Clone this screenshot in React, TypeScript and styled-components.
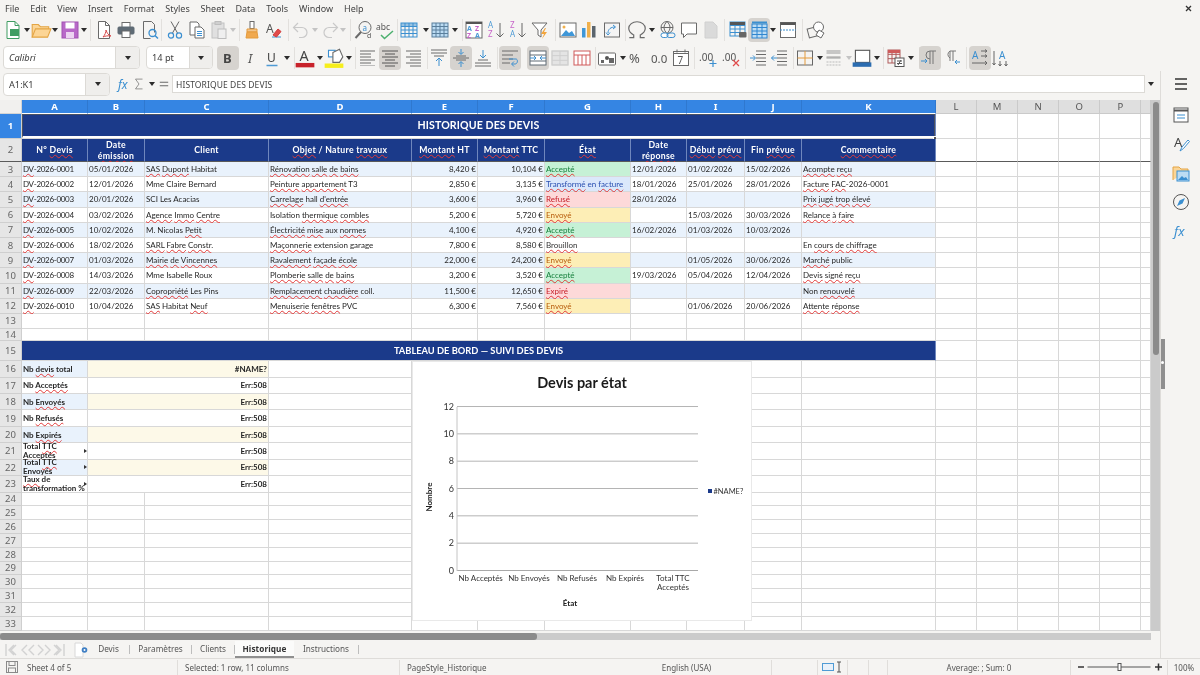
import React from 'react';
import styled, { createGlobalStyle } from 'styled-components';

const Global = createGlobalStyle`
  html, body { margin: 0; padding: 0; background: #f5f4f2; }
  * { box-sizing: border-box; }
`;

const UI = `"Noto Sans", "Open Sans", sans-serif`;
const SHEET = `Lato, "Liberation Sans", sans-serif`;

const Page = styled.div`
  width: 1200px; height: 675px; overflow: hidden; display: flex; flex-direction: column;
  background: #f5f4f2; font-family: ${UI}; color: #3c3c3c; filter: blur(0.3px);
`;
const MenuBar = styled.div`
  height: 16px; display: flex; align-items: center; padding-left: 5px; gap: 10.9px; font-size: 9px; color: #444; position: relative;
`;
const MenuItem = styled.span``;
const CloseMark = styled.svg`margin-left: auto; margin-right: 8px; width: 7px; height: 7px;`;
const Bar = styled.div<{ $h: number }>`height: ${p => p.$h}px; display: flex; align-items: center; flex: none;`;
const Slot = styled.div<{ $w: number; $ml: number; $active?: boolean }>`
  flex: none; width: ${p => p.$w}px; height: 24px; margin-left: ${p => p.$ml}px; display: flex; align-items: center; justify-content: center;
  border-radius: 4px; background: ${p => (p.$active ? '#d6d3cf' : 'transparent')};
`;
const Sep = styled.div<{ $ml: number }>`flex: none; width: 1px; height: 22px; margin-left: ${p => p.$ml}px; background: #e2e0dd;`;
const Drop = styled.div<{ $ml: number; $off?: boolean }>`
  flex: none; width: 0; height: 0; margin-left: ${p => p.$ml}px;
  border-left: 3.5px solid transparent; border-right: 3.5px solid transparent; border-top: 4px solid ${p => (p.$off ? '#c4c4c4' : '#2c2c2c')};
`;
const Combo = styled.div<{ $w: number; $ml: number; $h?: number }>`
  flex: none; width: ${p => p.$w}px; height: ${p => p.$h ?? 23}px; margin-left: ${p => p.$ml}px; display: flex; background: #fff;
  border: 1px solid #dcdad6; border-radius: 4px; overflow: hidden;
`;
const ComboText = styled.div<{ $italic?: boolean }>`
  flex: 1; display: flex; align-items: center; padding-left: 5px; font-size: 9.2px; color: #3c3c3c; font-style: ${p => (p.$italic ? 'italic' : 'normal')};
`;
const ComboBtn = styled.div<{ $w: number }>`
  width: ${p => p.$w}px; background: #efeeec; border-left: 1px solid #dcdad6; display: flex; align-items: center; justify-content: center;
`;
const Main = styled.div`flex: 1; min-height: 0; display: flex;`;
const Left = styled.div`width: 1161px; flex: none; display: flex; flex-direction: column; border-right: 1px solid #dedcd9;`;
const SideBar = styled.div`flex: 1; display: flex; flex-direction: column; align-items: center; padding-top: 2px; position: relative;`;
const SideBtn = styled.div<{ $mb: number }>`height: 22px; display: flex; align-items: center; justify-content: center; margin-bottom: ${p => p.$mb}px;`;
const SideHandle = styled.div`
  position: absolute; left: 0; top: 268px; width: 4px; height: 50px; background: #8f8f8f;
  &::after { content: ''; position: absolute; left: 0; top: 22px; width: 3px; height: 3px; border-radius: 50%; background: #fff; }
`;
const FormulaBar = styled.div`height: 29px; flex: none; display: flex; align-items: center; padding-bottom: 3px;`;
const FormulaInput = styled.div`
  flex: none; width: 973px; height: 18px; margin-left: 1px; background: #fff; border: 1px solid #dcdad6; display: flex; align-items: center;
  padding-left: 3px; font-size: 8.5px; color: #444; letter-spacing: 0.1px;
`;
const SheetRow = styled.div`height: 531px; flex: none; display: flex;`;
const Grid = styled.div`
  position: relative; width: 1151px; height: 531px; display: grid; background: #fff; font-family: ${SHEET};
  grid-template-columns: 22px 66px 57px 124px 143px 66px 67px 86px 56px 58px 57px 134px repeat(5, 41.1px) 9.5px;
  grid-template-rows: 14px 24.5px 23.5px repeat(11, 15.2px) 12px 20px repeat(8, 16.45px) repeat(10, 13.8px);
`;
const Corner = styled.div`background: #f1f0ee; border-right: 1px solid #d4d4d4; border-bottom: 1px solid #d4d4d4;`;
const ColHead = styled.div<{ $sel?: boolean }>`
  display: flex; align-items: center; justify-content: center; font-size: 9.5px; font-family: ${UI};
  font-weight: ${p => (p.$sel ? 700 : 400)}; color: ${p => (p.$sel ? '#fff' : '#555')};
  background: ${p => (p.$sel ? '#3585e3' : '#dfdfdf')}; border-right: 1px solid ${p => (p.$sel ? '#2f78cf' : '#cacaca')};
  border-bottom: 1px solid ${p => (p.$sel ? '#fff' : '#cacaca')};
`;
const RowHead = styled.div<{ $sel?: boolean; $freeze?: boolean }>`
  display: flex; align-items: center; justify-content: center; font-size: 9.5px; font-family: ${UI};
  font-weight: ${p => (p.$sel ? 700 : 400)}; color: ${p => (p.$sel ? '#fff' : '#666')};
  background: ${p => (p.$sel ? '#3585e3' : '#e6e6e6')}; border-right: 1px solid #cfcfcf;
  border-bottom: ${p => (p.$freeze ? '1.5px solid #5a5a5a' : '1px solid #cfcfcf')};
`;
const Cell = styled.div<{ $span?: number; $bg?: string; $right?: boolean; $center?: boolean; $bold?: boolean; $color?: string; $freeze?: boolean; $tight?: boolean; $narrow?: boolean }>`
  grid-column: span ${p => p.$span ?? 1}; min-width: 0; position: relative; display: flex; align-items: center;
  justify-content: ${p => (p.$right ? 'flex-end' : p.$center ? 'center' : 'flex-start')};
  text-align: ${p => (p.$center ? 'center' : 'left')};
  padding: 0 1px; font-size: 8px; white-space: ${p => (p.$tight ? 'normal' : 'nowrap')};
  line-height: ${p => (p.$tight ? '9px' : 'normal')}; letter-spacing: ${p => (p.$narrow ? '-0.3px' : '0')};
  font-weight: ${p => (p.$bold ? 700 : 400)}; color: ${p => p.$color ?? '#262626'}; background: ${p => p.$bg ?? '#fff'};
  border-right: 1px solid #d8d8d8; border-bottom: ${p => (p.$freeze ? '1.5px solid #5a5a5a' : '1px solid #d8d8d8')};
`;
const NavyCell = styled(Cell)`
  background: #1b3a8a; color: #fff; font-weight: 700; font-size: 8.7px; letter-spacing: 0.3px; line-height: 11px; white-space: normal;
  border-right: 1px solid #6f87bd;
`;
const TitleText = styled.span`font-size: 10.6px; letter-spacing: 0.1px;`;
const BandText = styled.span`font-size: 9.3px; letter-spacing: 0;`;
const Selection = styled.div`
  position: absolute; inset: 0; border: 1px solid #4a5160; border-bottom: 2px solid #fff;
`;
const Handle = styled.div`position: absolute; right: -3px; bottom: -3px; width: 5px; height: 5px; background: #555; border: 1px solid #fff;`;
const Tri = styled.div`
  position: absolute; right: 0; top: 50%; margin-top: -2px; width: 0; height: 0;
  border-top: 2px solid transparent; border-bottom: 2px solid transparent; border-left: 3px solid #333;
`;
const Squig = styled.span`text-decoration: underline wavy #e23a3a; text-decoration-thickness: 0.7px; text-underline-offset: 0.5px; text-decoration-skip-ink: none;`;
const ChartBox = styled.div`position: absolute; left: 412px; top: 261px; width: 340px; height: 260px; background: #fff; border: 1px solid #e9e9e9;`;
const VScroll = styled.div`width: 9.5px; flex: none; background: #cbcbcb; padding: 2px 1px 0 2px;`;
const VThumb = styled.div`height: 253px; background: #8b8b8b; border-radius: 3px;`;
const HScroll = styled.div`height: 10px; flex: none; background: #f5f4f2; padding-top: 2px;`;
const HTrack = styled.div`width: 1151px; height: 7px; background: #cbcbcb;`;
const HThumb = styled.div`width: 537px; height: 7px; background: #8b8b8b; border-radius: 3px;`;
const TabBar = styled.div`height: 17px; flex: none; display: flex; align-items: center; font-size: 8.2px;`;
const Tab = styled.div<{ $w: number; $on?: boolean }>`
  flex: none; width: ${p => p.$w}px; height: 17px; display: flex; align-items: center; justify-content: center; color: ${p => (p.$on ? '#333' : '#555')};
  font-weight: ${p => (p.$on ? 700 : 400)}; letter-spacing: ${p => (p.$on ? '0.1px' : '0')};
  background: ${p => (p.$on ? '#fbfbfa' : 'transparent')}; border-bottom: 2px solid ${p => (p.$on ? '#8f8f8f' : 'transparent')};
`;
const TabSep = styled.div`flex: none; width: 1px; height: 9px; background: #bdbdbd;`;
const Status = styled.div`
  height: 17px; flex: none; display: flex; align-items: center; font-size: 8px; color: #555; border-top: 1px solid #dedcd9; background: #f5f4f2;
`;
const StatusCell = styled.div<{ $w: number; $center?: boolean; $end?: boolean; $pl?: number }>`
  flex: none; width: ${p => p.$w}px; height: 15px; display: flex; align-items: center; gap: 9px; padding-left: ${p => p.$pl ?? 0}px;
  justify-content: ${p => (p.$center ? 'center' : 'flex-start')}; border-right: ${p => (p.$end ? 'none' : '1px solid #e0dedb')};
`;

/* ---------- icons (viewBox 20×20) ---------- */
const Ico: React.FC<{ children: React.ReactNode; s?: number }> = ({ children, s = 20 }) => (
  <svg width={s} height={s} viewBox="0 0 20 20" fill="none" stroke="#6a6a6a" strokeWidth={1}>{children}</svg>
);
const GridLines = ({ x, y, w, h, nx, ny, c }: { x: number; y: number; w: number; h: number; nx: number; ny: number; c: string }) => (
  <g stroke={c}>
    <rect x={x} y={y} width={w} height={h} />
    {Array.from({ length: nx - 1 }, (_, i) => <path key={i} d={`M${x + ((i + 1) * w) / nx} ${y}v${h}`} />)}
    {Array.from({ length: ny - 1 }, (_, i) => <path key={i} d={`M${x} ${y + ((i + 1) * h) / ny}h${w}`} />)}
  </g>
);
const Lines = ({ x, w, ys, c = '#6a6a6a' }: { x: number; w: number; ys: number[]; c?: string }) => (
  <path d={ys.map(y => `M${x} ${y}h${w}`).join('')} stroke={c} />
);
const Letter = ({ x, y, t, c, size = 10, bold, italic }: { x: number; y: number; t: string; c: string; size?: number; bold?: boolean; italic?: boolean }) => (
  <text x={x} y={y} fill={c} stroke="none" fontSize={size} fontFamily={UI} fontWeight={bold ? 700 : 400} fontStyle={italic ? 'italic' : 'normal'}>{t}</text>
);

const icons: Record<string, React.ReactNode> = {
  new: <Ico><path d="M4 1.5h8l4 4v13H4z" stroke="#3f9d62" fill="#fff" /><path d="M12 1.5v4h4" stroke="#3f9d62" /><rect x="7" y="9" width="9" height="7" fill="#3f9d62" stroke="none" /></Ico>,
  open: <Ico s={22}><path d="M2 16.5V5h5.5l2 2H17v2" stroke="#e4a544" fill="#fbd596" /><path d="M2 16.5 5 9h14l-3 7.5z" stroke="#e4a544" fill="#fcd595" /></Ico>,
  save: <Ico><rect x="2" y="2" width="16" height="16" fill="#b868c8" stroke="#a150b2" /><rect x="5.5" y="2.5" width="9" height="6" fill="#fff" stroke="none" /><rect x="6" y="12" width="8" height="6" fill="#ecd3f1" stroke="none" /></Ico>,
  pdf: <Ico><path d="M4.5 1.5h7l4 4v13h-11z" fill="#fff" stroke="#6a6a6a" /><path d="M11.5 1.5v4h4" /><path d="M9 17c2-2 3-5 3-7 1 3 2 5 5 6-3-.5-6 0-8 1z" stroke="#d84a4a" /></Ico>,
  print: <Ico><rect x="6" y="2.5" width="8" height="5" fill="#fff" /><rect x="2" y="7" width="16" height="7" rx="1" fill="#5f6b75" stroke="#5f6b75" /><rect x="6" y="11" width="8" height="6.5" fill="#fff" /></Ico>,
  preview: <Ico><path d="M3.5 1.5h8l3 3v8M3.5 1.5v17h7" /><circle cx="12.5" cy="13" r="3.5" stroke="#3b8fd0" strokeWidth={1.3} /><path d="m15 15.5 3 3" stroke="#3b8fd0" strokeWidth={1.5} /></Ico>,
  cut: <Ico><path d="M6 1.5 12.5 13M14 1.5 7.5 13" stroke="#666" /><circle cx="6" cy="15.5" r="2.6" stroke="#3b8fd0" strokeWidth={1.2} /><circle cx="14" cy="15.5" r="2.6" stroke="#3b8fd0" strokeWidth={1.2} /></Ico>,
  copy: <Ico><path d="M3 2h7l2 2v11H3z" fill="#fff" /><path d="M8 7h6l3 3v8H8z" fill="#fff" /><Lines x={10} w={5} ys={[11.5, 13.5, 15.5]} c="#3b8fd0" /></Ico>,
  paste: <Ico><rect x="3" y="3" width="12" height="15" fill="#e0e0e0" stroke="#c2c2c2" /><rect x="6" y="1.5" width="6" height="3" fill="#cfcfcf" stroke="#bdbdbd" /><rect x="9" y="9" width="8" height="9.5" fill="#efefef" stroke="#bdbdbd" /></Ico>,
  clone: <Ico><rect x="8" y="1.5" width="4" height="7" fill="#fff" /><path d="M5 9h10v3H5z" fill="#f2c58d" stroke="#e49b3d" /><path d="M5 12h10l1 6H4z" fill="#f0a94f" stroke="#e49b3d" /></Ico>,
  clear: <Ico><Letter x={3} y={13} t="A" c="#555" size={12} /><path d="M9 17h9" stroke="#3b8fd0" /><path d="m10 15 5-6 3 2.5-4.5 5.5z" fill="#e14b4b" stroke="#d13b3b" /></Ico>,
  undo: <Ico><path d="M7 3 2.5 7.5 7 12M3 7.5h8a5 5 0 0 1 0 10H8" stroke="#c9c9c9" strokeWidth={1.2} /></Ico>,
  redo: <Ico><path d="M13 3l4.5 4.5L13 12M17 7.5H9a5 5 0 0 0 0 10h3" stroke="#c9c9c9" strokeWidth={1.2} /></Ico>,
  find: <Ico><circle cx="11" cy="7.5" r="6" /><path d="M7 12 1.5 18" strokeWidth={2} /><Letter x={8.5} y={10.5} t="a" c="#3b8fd0" size={8} /><Letter x={13} y={18} t="d" c="#555" size={7} /></Ico>,
  spell: <Ico><Letter x={1} y={10} t="abc" c="#555" size={8.5} /><path d="m6 15 3.5 3.5L18 11" stroke="#4db06f" strokeWidth={1.5} /></Ico>,
  table: <Ico><GridLines x={2} y={3} w={16} h={14} nx={4} ny={4} c="#3b8fd0" /><rect x="2" y="3" width="16" height="3.5" fill="#3b8fd0" opacity={0.5} stroke="none" /></Ico>,
  rows: <Ico><rect x="2" y="3" width="16" height="14" fill="#bcdcf3" stroke="none" /><GridLines x={2} y={3} w={16} h={14} nx={4} ny={4} c="#5a7f9c" /></Ico>,
  sortg: <Ico><rect x="2" y="2" width="16" height="16" fill="#fff" /><rect x="2" y="2" width="16" height="2" fill="#555" stroke="none" /><Letter x={3} y={11} t="A" c="#4f9bd5" size={7} bold /><Letter x={11} y={11} t="Z" c="#c765c9" size={7} bold /><Letter x={3} y={17.5} t="Z" c="#c765c9" size={7} bold /><Letter x={11} y={17.5} t="A" c="#4f9bd5" size={7} bold /></Ico>,
  az: <Ico><Letter x={1} y={8} t="A" c="#4f9bd5" size={8} /><Letter x={1} y={17} t="Z" c="#c765c9" size={8} /><path d="M13 3v14M9.5 13.5 13 17l3.5-3.5" stroke="#666" /></Ico>,
  za: <Ico><Letter x={1} y={8} t="Z" c="#c765c9" size={8} /><Letter x={1} y={17} t="A" c="#4f9bd5" size={8} /><path d="M13 3v14M9.5 13.5 13 17l3.5-3.5" stroke="#666" /></Ico>,
  filter: <Ico><path d="M2 3h15l-6 7v7l-3-2v-5z" fill="#fff" /><path d="M15 8l-4 6h3l-2 5 5-7h-3l2-4z" fill="#f3a53c" stroke="none" /></Ico>,
  image: <Ico><rect x="2" y="3" width="16" height="14" fill="#fff" /><path d="M3 16l5-6 3 3 3-2 3 5z" fill="#3f97d8" stroke="none" /><circle cx="6" cy="7" r="1.5" fill="#f1b04a" stroke="none" /></Ico>,
  chart: <Ico><rect x="3" y="8" width="3.5" height="9.5" fill="#3f97d8" stroke="none" /><rect x="8" y="2" width="3.5" height="15.5" fill="#f0b04c" stroke="none" /><rect x="13" y="6" width="3.5" height="11.5" fill="#5a646d" stroke="none" /></Ico>,
  pivot: <Ico><rect x="2.5" y="3" width="15" height="14" fill="#f4f4f4" /><path d="M6 13c0-4 3-6 7-6M11 5l2.5 2L11 9M6 15l-2-2.5M6 15l2-2.5" stroke="#3b8fd0" /></Ico>,
  omega: <Ico s={22}><path d="M3 17h4v-2.5C4 13 2.5 10.5 2.5 8.5 2.5 5 6 2.5 10 2.5s7.5 2.5 7.5 6c0 2-1.5 4.5-4.5 6V17h4" strokeWidth={1.1} /></Ico>,
  link: <Ico><circle cx="9" cy="7.5" r="6" /><path d="M3 7.5h12M9 1.5c-4 4-4 8 0 12M9 1.5c4 4 4 8 0 12" /><rect x="3" y="13" width="7" height="4.5" rx="2.2" fill="#fff" stroke="#3b8fd0" /><rect x="9" y="13" width="8" height="4.5" rx="2.2" stroke="#3b8fd0" /></Ico>,
  comment: <Ico><path d="M2.5 3h15v11H8l-3.5 3.5V14h-2z" fill="#fff" /></Ico>,
  note: <Ico><path d="M4 2h8l4 4v12H4z" fill="#dadada" stroke="#d0d0d0" /></Ico>,
  area: <Ico><GridLines x={2} y={2} w={15} h={14} nx={3} ny={4} c="#3b8fd0" /><rect x="2" y="2" width="15" height="3" fill="#555" stroke="none" /><rect x="11" y="12" width="7.5" height="5.5" rx="1" fill="#666" stroke="none" /></Ico>,
  freeze: <Ico><rect x="3" y="4" width="15" height="14" fill="#bcdcf3" stroke="none" /><GridLines x={3} y={4} w={15} h={14} nx={3} ny={4} c="#2f86d0" /><rect x="3" y="1.5" width="15" height="2" fill="#3b8fd0" stroke="none" /></Ico>,
  split: <Ico><rect x="2.5" y="2.5" width="15" height="15" fill="#fff" /><rect x="2.5" y="2.5" width="15" height="2.5" fill="#555" stroke="none" /><path d="M2 10h16" stroke="#3b8fd0" strokeDasharray="2 1" /></Ico>,
  shapes: <Ico><rect x="2" y="8" width="9" height="9" transform="rotate(-15 6 12)" /><circle cx="12.5" cy="7" r="5" fill="#fff" /><path d="M13 10l5 3-3 5-5-3z" fill="#fff" /></Ico>,
  bold: <Letter x={5} y={15} t="B" c="#444" size={13} bold />,
  italic: <Letter x={7} y={15} t="I" c="#555" size={13} italic />,
  under: <><Letter x={5} y={14} t="U" c="#444" size={12} /><path d="M4.5 17.5h11" stroke="#4f9bd5" strokeWidth={1.5} /></>,
  fcolor: <Ico s={22}><Letter x={5} y={13} t="A" c="#444" size={13} /><rect x="1.5" y="14.5" width="17" height="4" fill="#c8222b" stroke="none" /></Ico>,
  hcolor: <Ico s={22}><rect x="5" y="3" width="6" height="6" fill="#fff" stroke="#3b8fd0" /><path d="M9 5l6-3 3 7-3 5H9z" fill="#fff" /><rect x="1.5" y="15" width="17" height="4" fill="#f6ee1c" stroke="none" /></Ico>,
  aleft: <Ico><Lines x={2} w={15} ys={[3, 12]} /><Lines x={2} w={11} ys={[6, 9, 15]} /><Lines x={2} w={15} ys={[17.5]} c="#bdbdbd" /></Ico>,
  acenter: <Ico><Lines x={2} w={16} ys={[3, 9, 15]} c="#555" /><Lines x={5} w={10} ys={[6, 12, 18]} c="#555" /></Ico>,
  aright: <Ico><Lines x={3} w={15} ys={[3, 9, 15]} /><Lines x={7} w={11} ys={[6, 12, 18]} /></Ico>,
  vtop: <Ico><Lines x={2} w={16} ys={[2, 5]} /><Lines x={5} w={10} ys={[8]} /><path d="M10 18V10M7 13l3-3 3 3" stroke="#3b8fd0" /></Ico>,
  vmid: <Ico><Lines x={2} w={16} ys={[10]} /><Lines x={5} w={10} ys={[8, 12]} /><path d="M10 1v5M7.5 4 10 6.5 12.5 4M10 19v-5M7.5 16l2.5-2.5 2.5 2.5" stroke="#3b8fd0" /></Ico>,
  vbot: <Ico><Lines x={2} w={16} ys={[15, 18]} /><Lines x={5} w={10} ys={[12]} /><path d="M10 2v8M7 7l3 3 3-3" stroke="#3b8fd0" /></Ico>,
  wrap: <Ico><Lines x={2} w={16} ys={[3]} /><Lines x={2} w={11} ys={[7, 11]} /><Lines x={2} w={8} ys={[15]} /><path d="M9 11h7c2 0 2 5-1 5h-3M14 13.5 11.5 16l2.5 2.5" stroke="#3b8fd0" /></Ico>,
  merge: <Ico><rect x="2" y="3" width="16" height="14" fill="#fff" stroke="#5f6b75" /><Lines x={2} w={16} ys={[7, 13]} c="#5f6b75" /><path d="M2 10h6M12 10h6M6 8l2 2-2 2M14 8l-2 2 2 2" stroke="#3b8fd0" /></Ico>,
  unm: <Ico><rect x="2" y="3" width="16" height="14" fill="#e4e4e4" stroke="#cfcfcf" /><GridLines x={2} y={3} w={16} h={14} nx={2} ny={3} c="#cfcfcf" /></Ico>,
  split2: <Ico><rect x="2" y="3" width="16" height="14" fill="#fff" stroke="#d05a5a" /><Lines x={2} w={16} ys={[7]} c="#d05a5a" /><path d="M6 7v10M10 7v10M14 7v10" stroke="#d05a5a" /></Ico>,
  numfmt: <Ico><rect x="1.5" y="5" width="17" height="12" rx="1" fill="#fff" /><rect x="4" y="12" width="3" height="3" fill="#666" stroke="none" /><circle cx="10" cy="10" r="2" fill="#555" stroke="none" /><rect x="12" y="10" width="5" height="5" fill="#666" stroke="none" /></Ico>,
  pct: <Letter x={2} y={15} t="%" c="#555" size={13} />,
  dec: <Letter x={2} y={15} t="0.0" c="#555" size={11.5} />,
  date: <Ico><rect x="2.5" y="3.5" width="15" height="14" fill="#fff" /><path d="M2.5 3.5h15v2h-15zM6 1.5v3M14 1.5v3" /><Letter x={6.5} y={15.5} t="7" c="#555" size={10} /></Ico>,
  adddec: <Ico><Letter x={1} y={13} t=".00" c="#555" size={10} /><path d="M15 12v7M11.5 15.5h7" stroke="#3b8fd0" strokeWidth={1.2} /></Ico>,
  deldec: <Ico><Letter x={1} y={13} t=".00" c="#555" size={10} /><path d="m12 12 6 6M18 12l-6 6" stroke="#e14b4b" strokeWidth={1.2} /></Ico>,
  indent: <Ico><Lines x={8} w={10} ys={[3, 6.5, 10, 13.5, 17]} /><path d="M2 10h5M5 7.5 7.5 10 5 12.5" stroke="#3b8fd0" /></Ico>,
  outdent: <Ico><Lines x={8} w={10} ys={[3, 6.5, 10, 13.5, 17]} /><path d="M8 10H2.5M5 7.5 2.5 10 5 12.5" stroke="#3b8fd0" /></Ico>,
  borders: <Ico><rect x="2.5" y="3" width="15" height="14" stroke="#666" /><path d="M10 3v14M2.5 10h15" stroke="#e49b3d" /></Ico>,
  bstyle: <Ico><Lines x={2.5} w={14} ys={[3, 5, 9, 10]} c="#999" /><path d="M2.5 14h14M2.5 17h14" stroke="#bbb" strokeDasharray="2 1" /></Ico>,
  bcolor: <Ico s={22}><rect x="4" y="3" width="13" height="11" fill="#fff" stroke="#555" /><rect x="1.5" y="14" width="17" height="4" fill="#2b6cb0" stroke="none" /></Ico>,
  cond: <Ico><GridLines x={2} y={2} w={12} h={13} nx={3} ny={3} c="#b05a5a" /><rect x="2" y="2" width="12" height="3" fill="#cf5b5b" stroke="none" /><rect x="9" y="10" width="9" height="8.5" fill="#fff" stroke="#555" /><path d="M11 13h5M11 15.5h5M15 12l-3 5" stroke="#555" /></Ico>,
  ltr: <Ico><path d="M10 16V3h6M13 3v13M10 3a4 4 0 0 0 0 8" stroke="#777" /><path d="M1 13h6M5 11l2 2-2 2" stroke="#3b8fd0" /></Ico>,
  rtl: <Ico><path d="M8 13V3h6M11 3v10M8 3a4 4 0 0 0 0 7" stroke="#777" /><path d="M18 14h-5M15 12l-2 2 2 2" stroke="#3b8fd0" /></Ico>,
  tlr: <Ico><Letter x={2} y={11} t="A" c="#3b8fd0" size={10} /><path d="M11 3h6M11 8h6M15 1.5 17 3l-2 1.5M15 6.5 17 8l-2 1.5M2 15h15M15 13l2 2-2 2" stroke="#666" /></Ico>,
  ttb: <Ico><Letter x={8} y={11} t="A" c="#3b8fd0" size={10} /><path d="M3 3v14M9 13v5M15 13v5M1.5 15 3 17l1.5-2M7.5 16 9 18l1.5-2M13.5 16 15 18l1.5-2" stroke="#666" /></Ico>,
};

type Item = [number, string, boolean?];
const row1: Item[] = [[13,'new'],[27,'dd'],[42,'open'],[56,'dd'],[72,'save'],[86,'dd'],[93,'sep'],[107,'pdf'],[129,'print'],[153,'preview'],[164,'sep'],[178,'cut'],[200,'copy'],[222,'paste'],[236,'ddo'],[243,'sep'],[256,'clone'],[277,'clear'],[292,'sep'],[305,'undo'],[319,'ddo'],[335,'redo'],[348,'ddo'],[356,'sep'],[370,'find'],[391,'spell'],[403,'sep'],[415,'table'],[432,'dd'],[447,'rows'],[462,'dd'],[470,'sep'],[482,'sortg'],[505,'az'],[527,'za'],[548,'filter'],[563,'sep'],[576,'image'],[597,'chart'],[620,'pivot'],[633,'sep'],[645,'omega'],[660,'dd'],[677,'link'],[698,'comment'],[720,'note'],[733,'sep'],[747,'area'],[768,'freeze',true],[782,'dd'],[798,'split'],[812,'sep'],[826,'shapes']];
const row2: Item[] = [[228,'bold',true],[251,'italic'],[272,'under'],[287,'dd'],[295,'sep'],[306,'fcolor'],[321,'dd'],[336,'hcolor'],[351,'dd'],[358,'sep'],[371,'aleft'],[393,'acenter',true],[416,'aright'],[430,'sep'],[442,'vtop'],[464,'vmid',true],[486,'vbot'],[500,'sep'],[513,'wrap',true],[541,'merge',true],[563,'unm'],[585,'split2'],[598,'sep'],[610,'numfmt'],[626,'dd'],[641,'pct'],[663,'dec'],[685,'date'],[698,'sep'],[712,'adddec'],[735,'deldec'],[749,'sep'],[762,'indent'],[783,'outdent'],[797,'sep'],[809,'borders'],[824,'dd'],[839,'bstyle'],[854,'ddo'],[868,'bcolor'],[883,'dd'],[890,'sep'],[903,'cond'],[918,'dd'],[927,'sep'],[938,'ltr',true],[960,'rtl'],[974,'sep'],[988,'tlr',true],[1009,'ttb']];

function renderItems(items: Item[], start: number) {
  let edge = start;
  return items.map(([c, kind, active], i) => {
    if (kind === 'sep') { const ml = c - edge; edge = c + 1; return <Sep key={i} $ml={ml} />; }
    if (kind === 'dd' || kind === 'ddo') { const ml = c - 3.5 - edge; edge = c + 3.5; return <Drop key={i} $ml={ml} $off={kind === 'ddo'} />; }
    const w = 22; const ml = c - 11 - edge; edge = c + 11;
    const node = icons[kind];
    return <Slot key={i} $w={w} $ml={ml} $active={active}>{['bold','italic','under','pct','dec'].includes(kind) ? <Ico>{node}</Ico> : node}</Slot>;
  });
}

/* ---------- sheet content ---------- */
const T = ({ s }: { s: string }) => <>{s.split('~').map((p, i) => (i % 2 ? <Squig key={i}>{p}</Squig> : <React.Fragment key={i}>{p}</React.Fragment>))}</>;

const ALT = '#e9f2fc';
const state: Record<string, [string, string, string]> = {
  A: ['~Accepté~', '#c6f1d6', '#17803d'],
  T: ['~Transformé~ en ~facture~', '#dbe8fb', '#2a4fb0'],
  R: ['~Refusé~', '#fdd9d9', '#c6202a'],
  E: ['~Envoyé~', '#fdeeb6', '#b65a08'],
  X: ['~Expiré~', '#fdd9d9', '#c6202a'],
  B: ['~Brouillon~', '', '#333'],
};
const data: string[][] = [
  ['05/01/2026','~SAS~ ~Dupont~ Habitat','~Rénovation~ ~salle~ ~de~ ~bains~','8,420 €','10,104 €','A','12/01/2026','01/02/2026','15/02/2026','~Acompte~ ~reçu~'],
  ['12/01/2026','Mme Claire Bernard','~Peinture~ ~appartement~ T3','2,850 €','3,135 €','T','18/01/2026','25/01/2026','28/01/2026','~Facture~ ~FAC~-2026-0001'],
  ['20/01/2026','SCI Les Acacias','~Carrelage~ hall ~d\'entrée~','3,600 €','3,960 €','R','28/01/2026','','','~Prix~ ~jugé~ ~trop~ ~élevé~'],
  ['03/02/2026','~Agence~ ~Immo~ ~Centre~','Isolation ~thermique~ ~combles~','5,200 €','5,720 €','E','','15/03/2026','30/03/2026','~Relance~ ~à~ ~faire~'],
  ['10/02/2026','M. Nicolas ~Petit~','~Électricité~ ~mise~ aux ~normes~','4,100 €','4,920 €','A','16/02/2026','01/03/2026','10/03/2026',''],
  ['18/02/2026','~SARL~ ~Fabre~ ~Constr~.','~Maçonnerie~ extension garage','7,800 €','8,580 €','B','','','','En ~cours~ ~de~ ~chiffrage~'],
  ['01/03/2026','~Mairie~ ~de~ ~Vincennes~','~Ravalement~ ~façade~ ~école~','22,000 €','24,200 €','E','','01/05/2026','30/06/2026','~Marché~ public'],
  ['14/03/2026','Mme Isabelle Roux','~Plomberie~ ~salle~ ~de~ ~bains~','3,200 €','3,520 €','A','19/03/2026','05/04/2026','12/04/2026','~Devis~ ~signé~ ~reçu~'],
  ['22/03/2026','~Copropriété~ Les Pins','~Remplacement~ ~chaudière~ coll.','11,500 €','12,650 €','X','','','','Non ~renouvelé~'],
  ['10/04/2026','~SAS~ Habitat ~Neuf~','~Menuiserie~ ~fenêtres~ PVC','6,300 €','7,560 €','E','','01/06/2026','20/06/2026','~Attente~ ~réponse~'],
];
const heads = ['N° ~Devis~','Date ~émission~','Client','~Objet~ / Nature ~travaux~','~Montant~ HT','~Montant~ TTC','~État~','Date ~réponse~','~Début~ ~prévu~','Fin ~prévue~','~Commentaire~'];
const kpis: [string, string, boolean?][] = [['Nb ~devis~ total','#NAME?'],['Nb ~Acceptés~','Err:508'],['Nb ~Envoyés~','Err:508'],['Nb ~Refusés~','Err:508'],['Nb ~Expirés~','Err:508'],['Total ~TTC~ ~Acceptés~','Err:508',true],['Total ~TTC~ ~Envoyés~','Err:508',true],['~Taux~ de transformation %','Err:508',true]];

const Blank = ({ n, bg }: { n: number; bg?: string }) => <>{Array.from({ length: n }, (_, i) => <Cell key={i} $bg={bg} />)}</>;

const Chart = () => {
  const xs = [480.7, 529, 577, 625, 673].map(x => x - 413);
  const labels = ['Nb Acceptés', 'Nb Envoyés', 'Nb Refusés', 'Nb Expirés'];
  const f = { fontFamily: SHEET, stroke: 'none' } as const;
  return (
    <svg width="338" height="258" viewBox="0 0 338 258">
      <text x={169} y={26} textAnchor="middle" fontSize={14.5} fontWeight={700} fill="#1a1a1a" {...f}>Devis par état</text>
      {[0, 2, 4, 6, 8, 10, 12].map((v, i) => {
        const y = 208.5 - i * 27.33;
        return (
          <g key={v}>
            <path d={`M44 ${y}H285`} stroke={i === 0 ? '#a8a8a8' : '#b4b4b4'} strokeWidth={1} />
            <text x={41} y={y + 3} textAnchor="end" fontSize={9} fill="#333" {...f}>{v}</text>
          </g>
        );
      })}
      <path d="M44 45V209" stroke="#c4c4c4" />
      {labels.map((t, i) => <text key={t} x={xs[i]} y={218.5} textAnchor="middle" fontSize={8} fill="#333" {...f}>{t}</text>)}
      <text x={xs[4]} y={218.5} textAnchor="middle" fontSize={8} fill="#333" {...f}>Total TTC</text>
      <text x={xs[4]} y={227.5} textAnchor="middle" fontSize={8} fill="#333" {...f}>Acceptés</text>
      <text x={157} y={244} textAnchor="middle" fontSize={8} fontWeight={700} fill="#222" {...f}>État</text>
      <text transform="translate(19 135) rotate(-90)" textAnchor="middle" fontSize={8} fontWeight={700} fill="#222" {...f}>Nombre</text>
      <rect x={295} y={127} width={4} height={4} fill="#1b3a8a" />
      <text x={300.500} y={132} fontSize={7.5} fill="#333" {...f}>#NAME?</text>
    </svg>
  );
};

export default function App() {
  const columns = 'ABCDEFGHIJK'.split('');
  return (
    <Page>
      <Global />
      <MenuBar>
        {['File','Edit','View','Insert','Format','Styles','Sheet','Data','Tools','Window','Help'].map(m => <MenuItem key={m}>{m}</MenuItem>)}
        <CloseMark viewBox="0 0 7 7"><path d="M1 1l5 5M6 1 1 6" stroke="#333" strokeWidth={1.3} /></CloseMark>
      </MenuBar>
      <Bar $h={28}>{renderItems(row1, 0)}</Bar>
      <Bar $h={27}>
        <Combo $w={137} $ml={3}><ComboText $italic>Calibri</ComboText><ComboBtn $w={24}><Drop $ml={0} /></ComboBtn></Combo>
        <Combo $w={67} $ml={6}><ComboText>14 pt</ComboText><ComboBtn $w={23}><Drop $ml={0} /></ComboBtn></Combo>
        {renderItems(row2, 213)}
      </Bar>
      <Main>
        <Left>
          <FormulaBar>
            <Combo $w={107} $ml={3}><ComboText>A1:K1</ComboText><ComboBtn $w={24}><Drop $ml={0} /></ComboBtn></Combo>
            <Slot $w={20} $ml={4}><Ico><Letter x={4} y={15} t="fx" c="#3b8fd0" size={12} italic /></Ico></Slot>
            <Slot $w={14} $ml={-2}><Ico><path d="M15 3H5l5 7-5 7h10" /></Ico></Slot>
            <Drop $ml={2.5} />
            <Slot $w={14} $ml={2.5}><Ico><path d="M4 7.5h12M4 12.5h12" strokeWidth={1.5} /></Ico></Slot>
            <FormulaInput>HISTORIQUE DES DEVIS</FormulaInput>
            <Drop $ml={2.5} />
          </FormulaBar>
          <SheetRow>
            <Grid>
              <Corner />
              {columns.map(c => <ColHead key={c} $sel>{c}</ColHead>)}
              {'LMNOP'.split('').map(c => <ColHead key={c}>{c}</ColHead>)}
              <ColHead />

              <RowHead $sel>1</RowHead>
              <NavyCell $span={11} $center><TitleText>HISTORIQUE DES DEVIS</TitleText><Selection /><Handle /></NavyCell>
              <Blank n={6} />

              <RowHead $freeze>2</RowHead>
              {heads.map(h => <NavyCell key={h} $center $freeze><span><T s={h} /></span></NavyCell>)}
              {Array.from({ length: 6 }, (_, i) => <Cell key={i} $freeze />)}

              {data.map((r, i) => {
                const bg = i % 2 === 0 ? ALT : undefined;
                const st = state[r[5]];
                return (
                  <React.Fragment key={i}>
                    <RowHead>{i + 3}</RowHead>
                    <Cell $bg={bg} $narrow><T s={`~DV~-2026-${String(i + 1).padStart(4, '0')}`} /></Cell>
                    <Cell $bg={bg}>{r[0]}</Cell>
                    <Cell $bg={bg}><span><T s={r[1]} /></span></Cell>
                    <Cell $bg={bg}><span><T s={r[2]} /></span></Cell>
                    <Cell $bg={bg} $right>{r[3]}</Cell>
                    <Cell $bg={bg} $right>{r[4]}</Cell>
                    <Cell $bg={st[1] || bg} $color={st[2]}><span><T s={st[0]} /></span></Cell>
                    <Cell $bg={bg}>{r[6]}</Cell>
                    <Cell $bg={bg}>{r[7]}</Cell>
                    <Cell $bg={bg}>{r[8]}</Cell>
                    <Cell $bg={bg}><span><T s={r[9]} /></span></Cell>
                    <Blank n={6} />
                  </React.Fragment>
                );
              })}

              <RowHead>13</RowHead><Blank n={17} />
              <RowHead>14</RowHead><Blank n={17} />

              <RowHead>15</RowHead>
              <NavyCell $span={11} $center><BandText>TABLEAU DE BORD — SUIVI DES DEVIS</BandText></NavyCell>
              <Blank n={6} />

              {kpis.map(([label, val, wrap], i) => (
                <React.Fragment key={i}>
                  <RowHead>{i + 16}</RowHead>
                  <Cell $bold $tight={wrap} $bg={i % 2 === 0 ? ALT : undefined}><span><T s={label} /></span>{wrap && <Tri />}</Cell>
                  <Cell $span={2} $right $bold $bg={i % 2 === 0 ? '#fdf9e8' : undefined}>{val}</Cell>
                  <Blank n={14} />
                </React.Fragment>
              ))}

              {Array.from({ length: 10 }, (_, i) => (
                <React.Fragment key={i}>
                  <RowHead>{i + 24}</RowHead>
                  <Blank n={17} />
                </React.Fragment>
              ))}

              <ChartBox><Chart /></ChartBox>
            </Grid>
            <VScroll><VThumb /></VScroll>
          </SheetRow>
          <HScroll><HTrack><HThumb /></HTrack></HScroll>
          <TabBar>
            <Slot $w={62} $ml={4}>
              <svg width="62" height="14" viewBox="0 0 62 14" fill="none" stroke="#d2d2d2" strokeWidth={1.4}>
                <path d="M2 1v12M10 2 5 7l5 5M12 2 7 7l5 5M23 2l-5 5 5 5M30 2l-5 5 5 5M34 2l5 5-5 5M41 2l5 5-5 5M50 2l5 5-5 5M52 2l5 5-5 5M60 1v12" />
              </svg>
            </Slot>
            <Slot $w={14} $ml={8}>
              <svg width="14" height="16" viewBox="0 0 14 16" fill="none">
                <path d="M1 1h6l2 2v12H1z" fill="#fff" stroke="#d8d8d8" />
                <circle cx="10.500" cy="8" r="2.800" fill="#3f7fc4" /><circle cx="10.500" cy="8" r="1" fill="#fff" />
              </svg>
            </Slot>
            <Tab $w={41}>Devis</Tab><TabSep />
            <Tab $w={61}>Paramètres</Tab><TabSep />
            <Tab $w={42}>Clients</Tab><TabSep />
            <Tab $w={59} $on>Historique</Tab>
            <Tab $w={64}>Instructions</Tab><TabSep />
          </TabBar>
        </Left>
        <SideBar>
          <SideHandle />
          <SideBtn $mb={9}><Ico><path d="M4 5h12M4 10h12M4 15h12" stroke="#333" strokeWidth={1.5} /></Ico></SideBtn>
          <SideBtn $mb={6}><Ico><rect x="3" y="3" width="14" height="14" fill="#fff" stroke="#555" /><path d="M3 5.5h14" stroke="#555" strokeWidth={2} /><path d="M6 10h8M6 13h8" stroke="#3b8fd0" /></Ico></SideBtn>
          <SideBtn $mb={8}><Ico><Letter x={3} y={14} t="A" c="#444" size={13} /><path d="M9 18l2-4 6-7 1.5 1.5-6 7z" fill="#fff" stroke="#3b8fd0" /></Ico></SideBtn>
          <SideBtn $mb={7}><Ico><path d="M2 17V4h6l2 2h7v2" stroke="#e4a544" fill="#fbd596" /><rect x="6" y="8" width="12" height="10" fill="#bcdcf3" stroke="#3b8fd0" /><path d="m7 17 4-4 2 2 2-1 2 3z" fill="#3b8fd0" stroke="none" /></Ico></SideBtn>
          <SideBtn $mb={7}><Ico><circle cx="10" cy="10" r="7.5" stroke="#555" /><path d="m14 6-5.5 2.5L6 14l5.500-2.500z" fill="#3b8fd0" stroke="none" /></Ico></SideBtn>
          <SideBtn $mb={0}><Ico><Letter x={3} y={15} t="fx" c="#3b8fd0" size={13} italic /></Ico></SideBtn>
        </SideBar>
      </Main>
      <Status>
        <StatusCell $w={178} $pl={6}>
          <svg width="12" height="12" viewBox="0 0 12 12" fill="none" stroke="#8a8a8a"><rect x="0.5" y="0.5" width="11" height="11" /><rect x="3" y="0.5" width="6" height="4" /><rect x="2.5" y="7" width="7" height="4.5" /></svg>
          <MenuItem>Sheet 4 of 5</MenuItem>
        </StatusCell>
        <StatusCell $w={222} $pl={7}>Selected: 1 row, 11 columns</StatusCell>
        <StatusCell $w={202} $pl={7} $end>PageStyle_Historique</StatusCell>
        <StatusCell $w={170} $center>English (USA)</StatusCell>
        <StatusCell $w={46} />
        <StatusCell $w={30} $center>
          <svg width="22" height="12" viewBox="0 0 22 12" fill="none"><rect x="0.5" y="2.5" width="11" height="7" stroke="#4f9bd5" fill="#e8f1fa" /><path d="M17 1v10M15 1h4M15 11h4" stroke="#555" /></svg>
        </StatusCell>
        <StatusCell $w={21} />
        <StatusCell $w={19} />
        <StatusCell $w={183} $center>Average: ; Sum: 0</StatusCell>
        <StatusCell $w={97} $center>
          <svg width="90" height="12" viewBox="0 0 90 12" fill="none" stroke="#555"><path d="M4 6h6" strokeWidth={1.5} stroke="#333" /><path d="M13.5 6h63" /><rect x="44" y="2.5" width="3" height="7" fill="#fff" /><path d="M81 6h7M84.5 2.5v7" strokeWidth={1.5} stroke="#333" /></svg>
        </StatusCell>
        <StatusCell $w={32} $center $end>100%</StatusCell>
      </Status>
    </Page>
  );
}
